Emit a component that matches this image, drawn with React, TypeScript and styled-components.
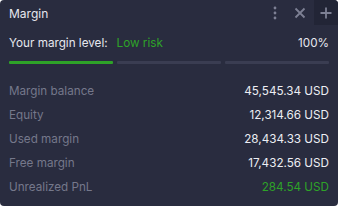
import React from 'react';
import styled, { createGlobalStyle } from 'styled-components';

const GlobalStyle = createGlobalStyle`
  html, body {
    margin: 0;
    padding: 0;
    background: #ffffff;
  }
  body {
    font-family: 'Inter', 'Noto Sans', sans-serif;
  }
`;

const Panel = styled.div`
  width: 338px;
  height: 206px;
  box-sizing: border-box;
  background-color: #292c3f;
  border-radius: 4px;
  display: flex;
  flex-direction: column;
  overflow: hidden;
`;

const Header = styled.div`
  display: flex;
  align-items: center;
  height: 25px;
  padding-left: 9px;
`;

const Title = styled.div`
  flex: 1;
  color: #e6e7ee;
  font-size: 12px;
  font-weight: 400;
  padding-top: 1px;
`;

const HeaderButton = styled.div<{ $dark?: boolean }>`
  display: flex;
  align-items: center;
  justify-content: center;
  width: ${(p) => (p.$dark ? '24px' : '25px')};
  height: 25px;
  color: #7d8094;
  background-color: ${(p) => (p.$dark ? '#222536' : 'transparent')};
  margin-left: ${(p) => (p.$dark ? '2px' : '0')};
`;

const Body = styled.div`
  display: flex;
  flex-direction: column;
  padding: 0 9px;
`;

const LevelRow = styled.div`
  display: flex;
  align-items: center;
  height: 36px;
  font-size: 11.7px;
  color: #e6e7ee;
`;

const LevelLabel = styled.span`
  margin-right: 9px;
`;

const Risk = styled.span`
  flex: 1;
  color: #2ea328;
`;

const Bars = styled.div`
  display: grid;
  grid-template-columns: repeat(3, 1fr);
  gap: 4px;
  height: 3px;
  margin-bottom: 15px;
`;

const Bar = styled.div<{ $on?: boolean }>`
  background-color: ${(p) => (p.$on ? '#2ea328' : '#3a3d52')};
  border-radius: 1px;
`;

const Row = styled.div`
  display: flex;
  justify-content: space-between;
  align-items: center;
  height: 24px;
  font-size: 11.7px;
`;

const Label = styled.span`
  color: #75788b;
`;

const Value = styled.span<{ $green?: boolean }>`
  color: ${(p) => (p.$green ? '#2ea328' : '#eceef3')};
`;

const rows = [
  { label: 'Margin balance', value: '45,545.34 USD' },
  { label: 'Equity', value: '12,314.66 USD' },
  { label: 'Used margin', value: '28,434.33 USD' },
  { label: 'Free margin', value: '17,432.56 USD' },
  { label: 'Unrealized PnL', value: '284.54 USD', green: true },
];

const App: React.FC = () => {
  return (
    <>
      <GlobalStyle />
      <Panel>
        <Header>
          <Title>Margin</Title>
          <HeaderButton>
            <svg width="4" height="14" viewBox="0 0 4 14">
              <circle cx="2" cy="2" r="1.4" fill="currentColor" />
              <circle cx="2" cy="7" r="1.4" fill="currentColor" />
              <circle cx="2" cy="12" r="1.4" fill="currentColor" />
            </svg>
          </HeaderButton>
          <HeaderButton>
            <svg width="12" height="12" viewBox="0 0 12 12">
              <path d="M1.5 1.5 L10.5 10.5 M10.5 1.5 L1.5 10.5" stroke="currentColor" strokeWidth="1.8" />
            </svg>
          </HeaderButton>
          <HeaderButton $dark>
            <svg width="12" height="12" viewBox="0 0 12 12">
              <path d="M6 0.5 V11.5 M0.5 6 H11.5" stroke="currentColor" strokeWidth="1.8" />
            </svg>
          </HeaderButton>
        </Header>
        <Body>
          <LevelRow>
            <LevelLabel>Your margin level:</LevelLabel>
            <Risk>Low risk</Risk>
            <span>100%</span>
          </LevelRow>
          <Bars>
            <Bar $on />
            <Bar />
            <Bar />
          </Bars>
          {rows.map((r) => (
            <Row key={r.label}>
              <Label>{r.label}</Label>
              <Value $green={r.green}>{r.value}</Value>
            </Row>
          ))}
        </Body>
      </Panel>
    </>
  );
};

export default App;
